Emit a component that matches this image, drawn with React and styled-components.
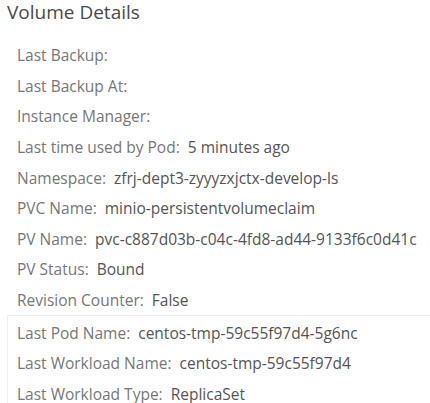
import React from 'react'
import styled, { createGlobalStyle } from 'styled-components'

const GlobalStyle = createGlobalStyle`
    body {
        margin: 0;
        background: #fff;
        font-family: "Open Sans", "Noto Sans", sans-serif;
    }
`

const details = [
    { label: 'Last Backup:', value: '' },
    { label: 'Last Backup At:', value: '' },
    { label: 'Instance Manager:', value: '' },
    { label: 'Last time used by Pod:', value: '5 minutes ago' },
    { label: 'Namespace:', value: 'zfrj-dept3-zyyyzxjctx-develop-ls' },
    { label: 'PVC Name:', value: 'minio-persistentvolumeclaim' },
    { label: 'PV Name:', value: 'pvc-c887d03b-c04c-4fd8-ad44-9133f6c0d41c' },
    { label: 'PV Status:', value: 'Bound' },
    { label: 'Revision Counter:', value: 'False' },
]

const workload = [
    { label: 'Last Pod Name:', value: 'centos-tmp-59c55f97d4-5g6nc' },
    { label: 'Last Workload Name:', value: 'centos-tmp-59c55f97d4' },
    { label: 'Last Workload Type:', value: 'ReplicaSet' },
]

export default function App() {
    return (
        <Page>
            <GlobalStyle />
            <Title>Volume Details</Title>
            <List>
                {details.map(d => (
                    <Row key={d.label}>
                        <Label>{d.label}</Label>
                        {d.value && <Value>{d.value}</Value>}
                    </Row>
                ))}
            </List>
            <WorkloadBox>
                {workload.map(d => (
                    <Row key={d.label}>
                        <Label>{d.label}</Label>
                        <Value>{d.value}</Value>
                    </Row>
                ))}
            </WorkloadBox>
        </Page>
    )
}

const Page = styled.div`
    width: 430px;
    height: 403px;
    overflow: hidden;
`

const Title = styled.div`
    padding: 0 0 0 7px;
    height: 29px;
    font-size: 19px;
    line-height: 24px;
    color: #4a4a4a;
`

const List = styled.div`
    padding: 11px 0 0 17px;
`

const Row = styled.div`
    display: flex;
    height: 30.6px;
    align-items: center;
    font-size: 15.5px;
    white-space: nowrap;
`

const Label = styled.span`
    color: #777;
    margin-right: 8px;
`

const Value = styled.span`
    color: #555;
`

const WorkloadBox = styled.div`
    margin-left: 7px;
    width: 440px;
    border: 1px solid #eee;
    padding: 1px 0 0 9px;
    box-sizing: border-box;
`
